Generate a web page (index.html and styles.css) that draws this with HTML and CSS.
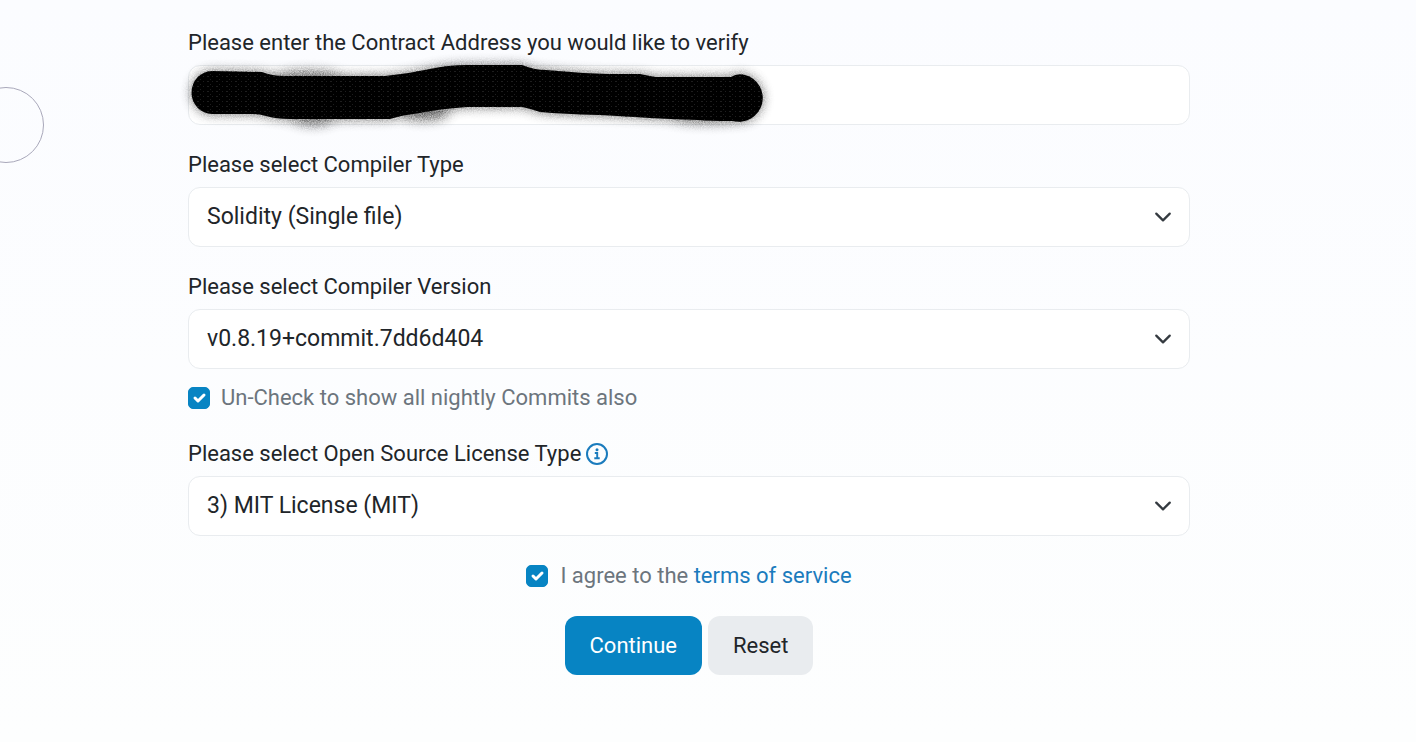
FILE: index.html
```html
<!DOCTYPE html>
<html lang="en">
<head>
    <meta charset="UTF-8">
    <meta name="viewport" content="width=device-width, initial-scale=1.0">
    <title>Verify Contract</title>
    <link rel="stylesheet" href="styles.css">
</head>
<body>
    <div class="circle"></div>
    <form class="verify-form">
        <div class="field">
            <label for="address">Please enter the Contract Address you would like to verify</label>
            <div class="control">
                <input type="text" id="address" class="input">
                <!-- hides the address -->
                <svg class="scribble" width="600" height="90" viewBox="-12 -14 600 90" aria-hidden="true">
                    <defs>
                        <filter id="spray" x="-10%" y="-50%" width="120%" height="200%">
                            <feGaussianBlur in="SourceGraphic" stdDeviation="6" result="soft"/>
                            <feTurbulence type="fractalNoise" baseFrequency="0.9" numOctaves="2" seed="4"/>
                            <feColorMatrix values="0 0 0 0 0  0 0 0 0 0  0 0 0 0 0  1 0 0 0 0.2"/>
                            <feComposite in="soft" operator="in"/>
                        </filter>
                        <pattern id="grain" width="19" height="5" patternUnits="userSpaceOnUse">
                            <path d="M0 1.5h2M5 1.5h1M9 1.5h2M15 1.5h1M3 4.5h1M12 4.5h1" stroke="#1e1e1e"/>
                        </pattern>
                        <path id="stroke" d="M24 6L74 7Q84 11 96 11H197Q219 9 242 4Q260 0 279 0H334Q346 5 358 5Q390 8 420 9H452L467 12H543Q549 8 557 10A23 23 0 0 1 545 56Q520 56 510 55Q480 54 462 53Q430 51 411 50Q375 49 352 47Q340 43 334 42H279Q250 44 232 48Q214 50 202 54H102Q88 54 78 51Q70 49 64 49H24A20 21 0 0 1 24 6Z"/>
                    </defs>
                    <g filter="url(#spray)" opacity="0.8">
                        <use href="#stroke"/>
                        <ellipse cx="125" cy="51" rx="24" ry="9"/>
                        <ellipse cx="235" cy="47" rx="26" ry="8"/>
                        <ellipse cx="120" cy="12" rx="34" ry="6"/>
                        <ellipse cx="520" cy="52" rx="40" ry="6"/>
                    </g>
                    <use href="#stroke"/>
                    <use href="#stroke" fill="url(#grain)"/>
                </svg>
            </div>
        </div>

        <div class="field">
            <label for="compiler-type">Please select Compiler Type</label>
            <div class="control">
                <select id="compiler-type" class="input">
                    <option>Solidity (Single file)</option>
                </select>
                <svg class="chevron" viewBox="0 0 16 16" aria-hidden="true"><path d="m2 5 6 6 6-6"/></svg>
            </div>
        </div>

        <div class="field">
            <label for="compiler-version">Please select Compiler Version</label>
            <div class="control">
                <select id="compiler-version" class="input">
                    <option>v0.8.19+commit.7dd6d404</option>
                </select>
                <svg class="chevron" viewBox="0 0 16 16" aria-hidden="true"><path d="m2 5 6 6 6-6"/></svg>
            </div>
            <div class="check nightly">
                <input type="checkbox" id="nightly" checked>
                <label for="nightly">Un-Check to show all nightly Commits also</label>
            </div>
        </div>

        <div class="field">
            <div class="label-row">
                <label for="license">Please select Open Source License Type</label>
                <a href="#" class="info" aria-label="License info">
                    <svg width="22" height="22" viewBox="0 0 22 22">
                        <circle cx="11" cy="11" r="10" fill="none" stroke="currentColor" stroke-width="2"/>
                        <circle cx="11" cy="6.8" r="1.5" fill="currentColor"/>
                        <path d="M8.8 10h2.4v5M8.3 15.2h5.4" fill="none" stroke="currentColor" stroke-width="1.9"/>
                    </svg>
                </a>
            </div>
            <div class="control">
                <select id="license" class="input">
                    <option>3) MIT License (MIT)</option>
                </select>
                <svg class="chevron" viewBox="0 0 16 16" aria-hidden="true"><path d="m2 5 6 6 6-6"/></svg>
            </div>
        </div>

        <div class="check terms">
            <input type="checkbox" id="terms" checked>
            <label for="terms">I agree to the <a href="#">terms of service</a></label>
        </div>

        <div class="buttons">
            <button type="submit" class="btn btn-primary">Continue</button>
            <button type="reset" class="btn btn-light">Reset</button>
        </div>
    </form>
</body>
</html>
```
FILE: styles.css
```css
*{
    box-sizing: border-box;
}

body{
    margin:0;
    padding:27px 38px 64px 0;
    min-height: 100vh;
    position: relative;
    overflow-x: hidden;
    background: linear-gradient(#fbfcff, #fdfefe);
    font-family: Roboto, "Liberation Sans", sans-serif;
    font-size: 22px;
    line-height: 32px;
    color:#212529;
}

a{
    color:#1a7bbd;
    text-decoration: none;
}

/* decoration cut off by the left edge */
.circle{
    position: absolute;
    left:-32px;
    top:87px;
    width:76px;
    height:76px;
    border:1px solid #a9a8ba;
    border-radius: 50%;
}

.verify-form{
    max-width:1002px;
    margin:0 auto;
}

.field{
    margin-bottom: 24px;
}

.field > label,
.label-row{
    display: flex;
    align-items: center;
    gap:5px;
    margin-bottom: 6px;
}

.info{
    display: flex;
}

.control{
    position: relative;
}

.input{
    display: block;
    width:100%;
    height:60px;
    padding:0 18px 2px;
    border:1px solid #e9ecef;
    border-radius: 12px;
    background: white;
    color:#212529;
    font-family: inherit;
    font-size: 23px;
    appearance: none;
}

.chevron{
    position: absolute;
    right:18px;
    top:21px;
    width:18px;
    height:18px;
    fill:none;
    stroke:#343a40;
    stroke-width:2;
    stroke-linecap: round;
    stroke-linejoin: round;
    pointer-events: none;
}

.scribble{
    position: absolute;
    left:-12px;
    top:-14px;
    pointer-events: none;
}

.check{
    display: flex;
    align-items: center;
    color:#6c757d;
}

.check input{
    appearance: none;
    width:22px;
    height:22px;
    margin:0;
    border-radius: 5px;
    border:1px solid #0784c3;
}

.check input:checked{
    background: #0784c3 url("data:image/svg+xml,%3Csvg xmlns='http://www.w3.org/2000/svg' viewBox='0 0 20 20'%3E%3Cpath fill='none' stroke='white' stroke-width='3' stroke-linecap='round' stroke-linejoin='round' d='m6 10 3 3 6-6'/%3E%3C/svg%3E") center / 20px no-repeat;
}

.nightly{
    gap:11px;
    margin-top: 13px;
}

.terms{
    gap:12px;
    justify-content: center;
}

.buttons{
    display: flex;
    justify-content: center;
    gap:6px;
    margin-top: 24px;
}

.btn{
    height:59px;
    padding:0 25px;
    border:0;
    border-radius: 12px;
    font-family: inherit;
    font-size: 22px;
}

.btn-primary{
    background: #0784c3;
    color:white;
}

.btn-light{
    background: #e9ecef;
    color:#212529;
}
```
